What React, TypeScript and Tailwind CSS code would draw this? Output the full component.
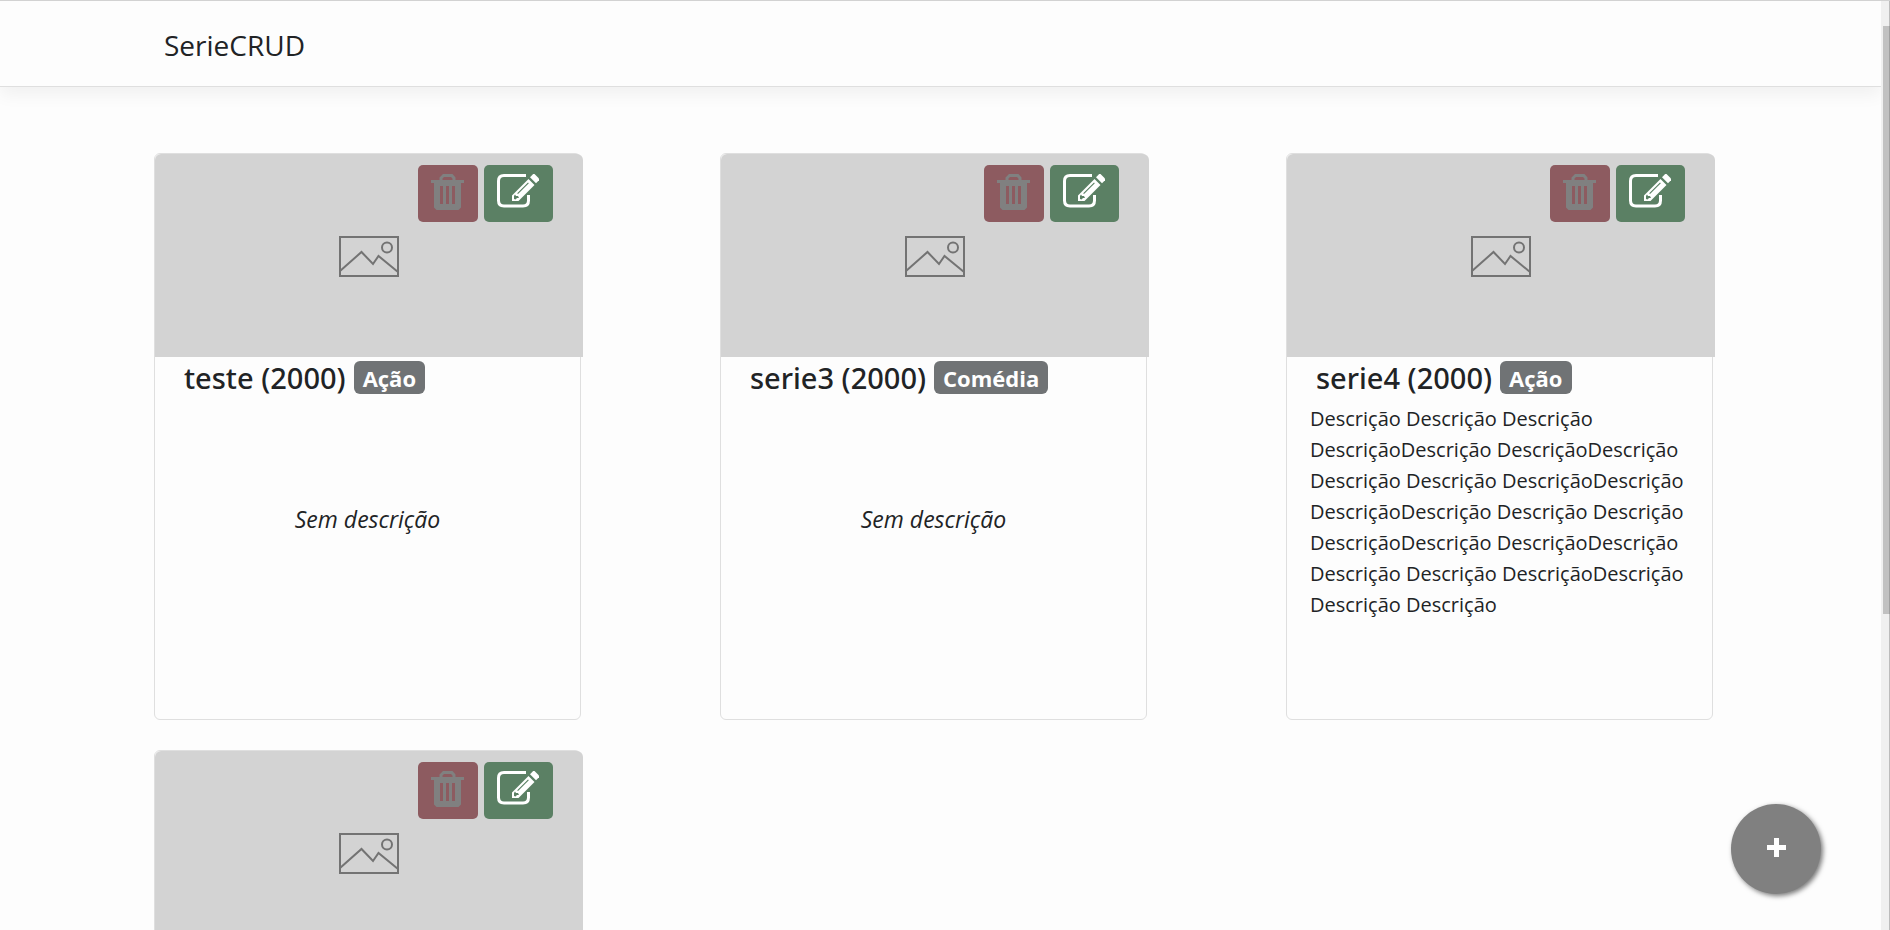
type Details = { name: string; year: number; genre: string; description?: string };
type Series = { id: number; details?: Details };

const series: Series[] = [
  { id: 1, details: { name: "teste", year: 2000, genre: "Ação" } },
  { id: 2, details: { name: "serie3", year: 2000, genre: "Comédia" } },
  {
    id: 3,
    details: {
      name: "serie4",
      year: 2000,
      genre: "Ação",
      description:
        "Descrição Descrição Descrição DescriçãoDescrição DescriçãoDescrição Descrição Descrição DescriçãoDescrição DescriçãoDescrição Descrição Descrição DescriçãoDescrição DescriçãoDescrição Descrição Descrição DescriçãoDescrição Descrição Descrição",
    },
  },
  { id: 4 },
];

function TrashIcon() {
  return (
    <svg className="h-[36px] w-[34px]" viewBox="13 9 34 36" fill="#808080" aria-hidden="true">
      <path d="M21.500 16v-3.500L25 9h9.500l3 3.500V16h-3v-2.500L33 12h-7l-1.500 1.500V16z" />
      <path d="M13 15h33v3H13z" />
      <path
        fillRule="evenodd"
        d="M16 17h27v25.500L40.500 45h-22L16 42.500zM22 21v18h3V21zM28 21v18h3V21zM34 21v18h3V21z"
      />
    </svg>
  );
}

function EditIcon() {
  return (
    <svg className="h-[34px] w-[43px]" viewBox="13 9 43 34" fill="#fff" aria-hidden="true">
      <path
        d="M42 10.500H20Q14.500 10.500 14.500 16v19.500Q14.500 41 20 41h19q5.500 0 5.500-5.500V30"
        fill="none"
        stroke="#fff"
        strokeWidth="3"
      />
      <path
        fillRule="evenodd"
        d="M28 30.500 44.500 14l6 6L34.500 36H28zM33.200 28.200l.8.8L44.800 18.200l-.8-.8zM30 31v3l1.500.500 1.500-1.500h2l-1-2h-2l-1-1.500z"
      />
      <path d="M46 12.300 49.200 9h1.300L55 13.500v1.800L52 18.300z" />
    </svg>
  );
}

function PictureIcon() {
  return (
    <svg
      className="h-[41px] w-[60px]"
      viewBox="0 0 60 41"
      fill="none"
      stroke="#737373"
      strokeWidth="2"
      role="img"
      aria-label="Sem imagem"
    >
      <path d="M1 1h58v39H1zM1 35l21.500-19L34 28l5.500-8L59 36" />
      <circle cx="48" cy="11.500" r="5" />
    </svg>
  );
}

function CardBody({ details }: { details: Details }) {
  return (
    <>
      <h2 className="flex items-center gap-2 pt-1 pl-[29px] font-['Noto_Sans',sans-serif] text-[29px] leading-[33px] font-medium">
        {details.name} ({details.year})
        <span className="h-[33px] rounded-md bg-[#707375] px-[9px] font-['Open_Sans',sans-serif] text-[22px] leading-[35px] font-bold text-white">
          {details.genre}
        </span>
      </h2>
      {details.description ? (
        <p className="mt-[9px] px-[23px] text-[20px] leading-[31px]">{details.description}</p>
      ) : (
        <p className="mt-[107px] text-center text-[23px] leading-[36px] italic">Sem descrição</p>
      )}
    </>
  );
}

function Card({ item }: { item: Series }) {
  return (
    <article className="flex h-[567px] w-[427px] flex-col rounded-md border border-[#dfdfdf]">
      <div className="relative flex h-[203px] w-[428px] shrink-0 items-center justify-center rounded-t-md bg-[#d3d3d3] pt-0.5">
        <PictureIcon />
        <div className="absolute top-[11px] right-[30px] flex gap-1.5">
          <button
            type="button"
            aria-label="Excluir"
            className="flex h-[57px] w-[60px] justify-center rounded-[5px] bg-[#8d5b60] pt-[9px]"
          >
            <TrashIcon />
          </button>
          <button
            type="button"
            aria-label="Editar"
            className="flex h-[57px] w-[69px] justify-center rounded-[5px] bg-[#5b8064] pt-[9px]"
          >
            <EditIcon />
          </button>
        </div>
      </div>
      {item.details && <CardBody details={item.details} />}
    </article>
  );
}

export default function App() {
  return (
    <div className="flex h-screen overflow-hidden border-t border-[#d2d2d2] bg-[#fdfdfd] font-['Open_Sans','Noto_Sans',sans-serif] text-[#212325]">
      <div className="flex-1 overflow-x-hidden overflow-y-auto [scrollbar-width:none]">
        <header className="flex h-[86px] items-center border-b border-[#dfdfdf] pt-0.5 pl-[164px] shadow-[0_8px_16px_rgba(0,0,0,0.05)]">
          <a href="#" className="text-[28px] leading-[40px]">
            SerieCRUD
          </a>
        </header>
        <main className="grid grid-cols-3 gap-y-[30px] pt-[66px] pr-[29px] pb-[30px] pl-[154px]">
          {series.map((item) => (
            <Card key={item.id} item={item} />
          ))}
        </main>
      </div>
      <div className="flex w-[9px] flex-col border-r border-[#bcbcbc] bg-[#f0f0f0] pt-[25px] pl-0.5" aria-hidden="true">
        <div className="-mr-px h-[65%] border-r border-[#9f9f9f] bg-[#c1c1c1]" />
      </div>
      <button
        type="button"
        aria-label="Adicionar série"
        className="fixed right-[69px] bottom-9 flex size-[90px] items-center justify-center rounded-full bg-[#808080] pb-[3px] shadow-[2px_2px_5px_#777]"
      >
        <svg className="size-[19px]" viewBox="0 0 19 19" fill="#fff" aria-hidden="true">
          <path d="M7 0h5v7h7v5h-7v7H7v-7H0V7h7z" />
        </svg>
      </button>
    </div>
  );
}
